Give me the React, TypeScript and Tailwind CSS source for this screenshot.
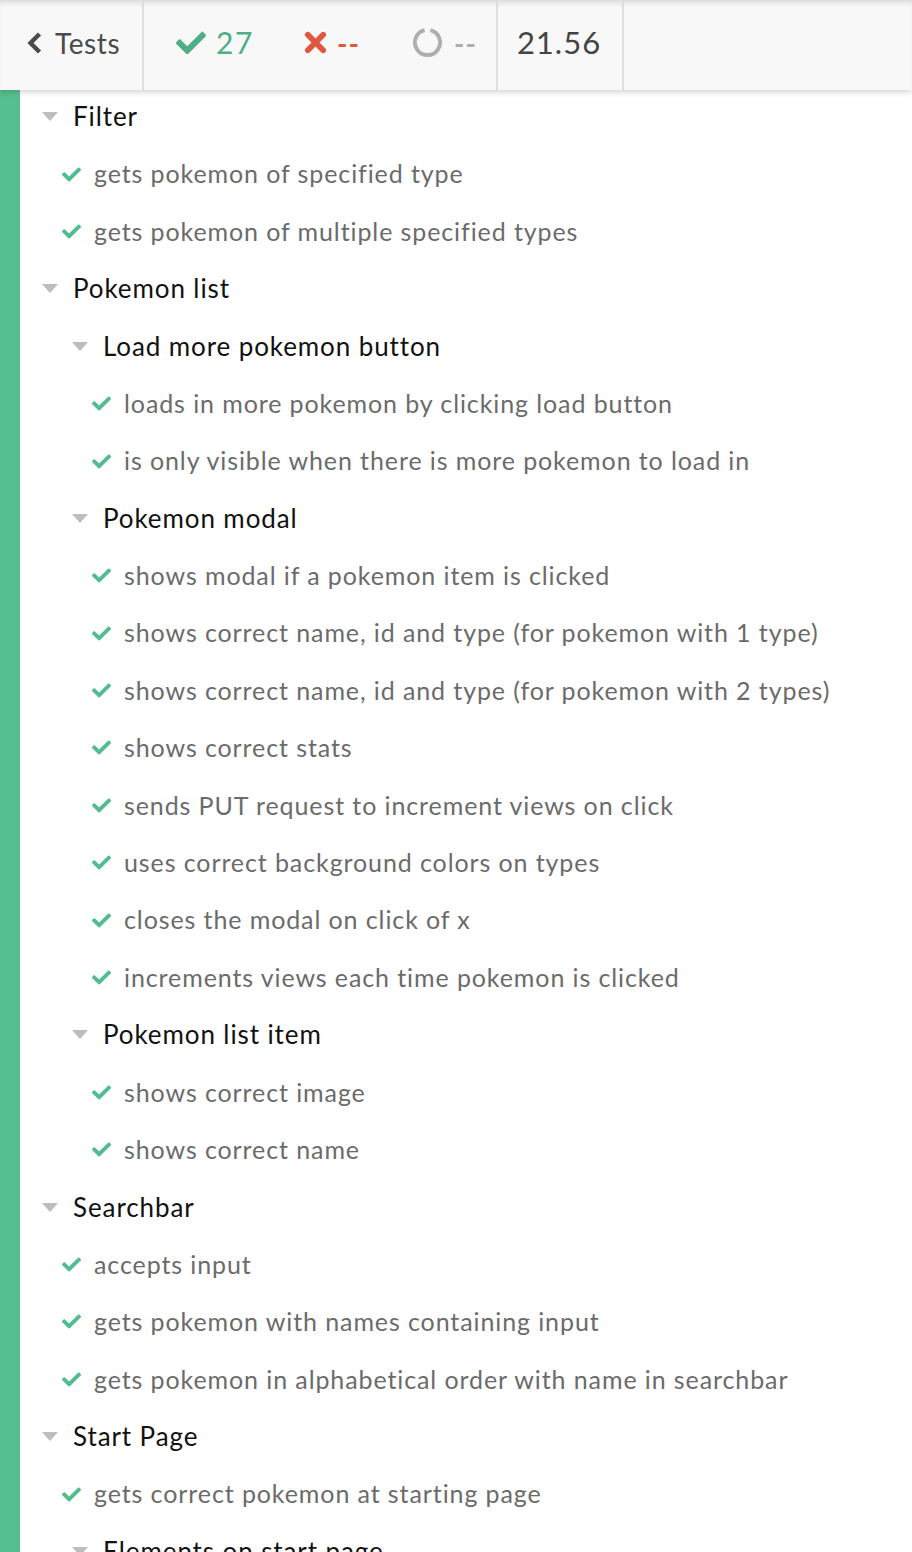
import React from 'react';

type Row = { kind: 'suite' | 'test'; level: number; text: string };

const rows: Row[] = [
  { kind: 'suite', level: 0, text: 'Filter' },
  { kind: 'test', level: 0, text: 'gets pokemon of specified type' },
  { kind: 'test', level: 0, text: 'gets pokemon of multiple specified types' },
  { kind: 'suite', level: 0, text: 'Pokemon list' },
  { kind: 'suite', level: 1, text: 'Load more pokemon button' },
  { kind: 'test', level: 1, text: 'loads in more pokemon by clicking load button' },
  { kind: 'test', level: 1, text: 'is only visible when there is more pokemon to load in' },
  { kind: 'suite', level: 1, text: 'Pokemon modal' },
  { kind: 'test', level: 1, text: 'shows modal if a pokemon item is clicked' },
  { kind: 'test', level: 1, text: 'shows correct name, id and type (for pokemon with 1 type)' },
  { kind: 'test', level: 1, text: 'shows correct name, id and type (for pokemon with 2 types)' },
  { kind: 'test', level: 1, text: 'shows correct stats' },
  { kind: 'test', level: 1, text: 'sends PUT request to increment views on click' },
  { kind: 'test', level: 1, text: 'uses correct background colors on types' },
  { kind: 'test', level: 1, text: 'closes the modal on click of x' },
  { kind: 'test', level: 1, text: 'increments views each time pokemon is clicked' },
  { kind: 'suite', level: 1, text: 'Pokemon list item' },
  { kind: 'test', level: 1, text: 'shows correct image' },
  { kind: 'test', level: 1, text: 'shows correct name' },
  { kind: 'suite', level: 0, text: 'Searchbar' },
  { kind: 'test', level: 0, text: 'accepts input' },
  { kind: 'test', level: 0, text: 'gets pokemon with names containing input' },
  { kind: 'test', level: 0, text: 'gets pokemon in alphabetical order with name in searchbar' },
  { kind: 'suite', level: 0, text: 'Start Page' },
  { kind: 'test', level: 0, text: 'gets correct pokemon at starting page' },
  { kind: 'suite', level: 1, text: 'Elements on start page' },
];

const Check = ({ className }: { className?: string }) => (
  <svg viewBox="0 0 512 512" className={className} fill="currentColor">
    <path d="M173.9 439.4l-166.4-166.4c-10-10-10-26.2 0-36.2l36.2-36.2c10-10 26.2-10 36.2 0L192 312.7 432.1 72.6c10-10 26.2-10 36.2 0l36.2 36.2c10 10 10 26.2 0 36.2L210.1 439.4c-10 10-26.2 10-36.2 0z" />
  </svg>
);

const Caret = () => (
  <svg viewBox="0 0 16 9" className="w-4 h-[9px] text-[#bdbdbd]" fill="currentColor">
    <path d="M0 0h16L8 9z" />
  </svg>
);

const ListRow = ({ row }: { row: Row }) => {
  const indent = row.level * 30;
  if (row.kind === 'suite') {
    return (
      <div className="h-[57.4px] flex items-center whitespace-nowrap" style={{ paddingLeft: 42 + indent }}>
        <div className="w-[31px] flex items-center"><Caret /></div>
        <span className="text-[26px] tracking-[0.9px] text-[#111]">{row.text}</span>
      </div>
    );
  }
  return (
    <div className="h-[57.4px] flex items-center whitespace-nowrap" style={{ paddingLeft: 62 + indent }}>
      <div className="w-[32px] flex items-center"><Check className="w-[19px] h-[19px] text-[#4fbd8d]" /></div>
      <span className="text-[25px] tracking-[0.9px] text-[#6b6b6b]">{row.text}</span>
    </div>
  );
};

export default function App() {
  return (
    <div className="w-[912px] h-[1552px] overflow-hidden bg-white font-['Lato',sans-serif]">
      {/* header */}
      <div className="relative z-10 h-[90px] flex bg-[#f8f8f8] shadow-[0_2px_6px_rgba(0,0,0,0.18),inset_0_6px_6px_-4px_rgba(0,0,0,0.15)]">
        <div className="w-[144px] border-r-2 border-[#dedede] flex items-center pb-[5px] pl-[26px] gap-[12px] text-[#4a4a4a]">
          <svg viewBox="0 0 16 24" className="w-[17px] h-[24px]" fill="none" stroke="currentColor" strokeWidth="4.4">
            <path d="M13 3L4 12l9 9" />
          </svg>
          <span className="text-[28px] tracking-[0.6px]">Tests</span>
        </div>
        <div className="w-[354px] border-r-2 border-[#dedede] flex items-center whitespace-nowrap pb-[5px] pl-[32px]">
          <Check className="w-[30px] h-[30px] text-[#4fae85]" />
          <span className="ml-[10px] w-[40px] text-[30px] tracking-[1.5px] text-[#4fae85]">27</span>
          <svg viewBox="0 0 24 24" className="ml-[48px] w-[23px] h-[23px] text-[#e0573f]" fill="none" stroke="currentColor" strokeWidth="6" strokeLinecap="round">
            <path d="M4 4l16 16M20 4L4 20" />
          </svg>
          <span className="ml-[10px] w-[26px] text-[28px] tracking-[1px] font-bold text-[#e0573f]">--</span>
          <svg viewBox="0 0 32 32" className="ml-[49px] w-[31px] h-[31px] text-[#aeaeae]" fill="none" stroke="currentColor" strokeWidth="4">
            <path d="M19 3.3A13 13 0 1 1 13 3.3" />
          </svg>
          <span className="ml-[11px] text-[28px] tracking-[1px] font-bold text-[#aeaeae]">--</span>
        </div>
        <div className="w-[126px] border-r-2 border-[#dedede] flex items-center pb-[5px] justify-center pr-[2px]">
          <span className="text-[31px] tracking-[1px] text-[#444]">21.56</span>
        </div>
        <div className="flex-1" />
      </div>
      {/* body */}
      <div className="flex h-[1462px]">
        <div className="w-[20px] bg-[#55bf90]" />
        <div className="flex-1 -mt-[2px]" style={{ marginLeft: -20 }}>
          {rows.map((r, i) => (
            <ListRow key={i} row={r} />
          ))}
        </div>
      </div>
    </div>
  );
}
